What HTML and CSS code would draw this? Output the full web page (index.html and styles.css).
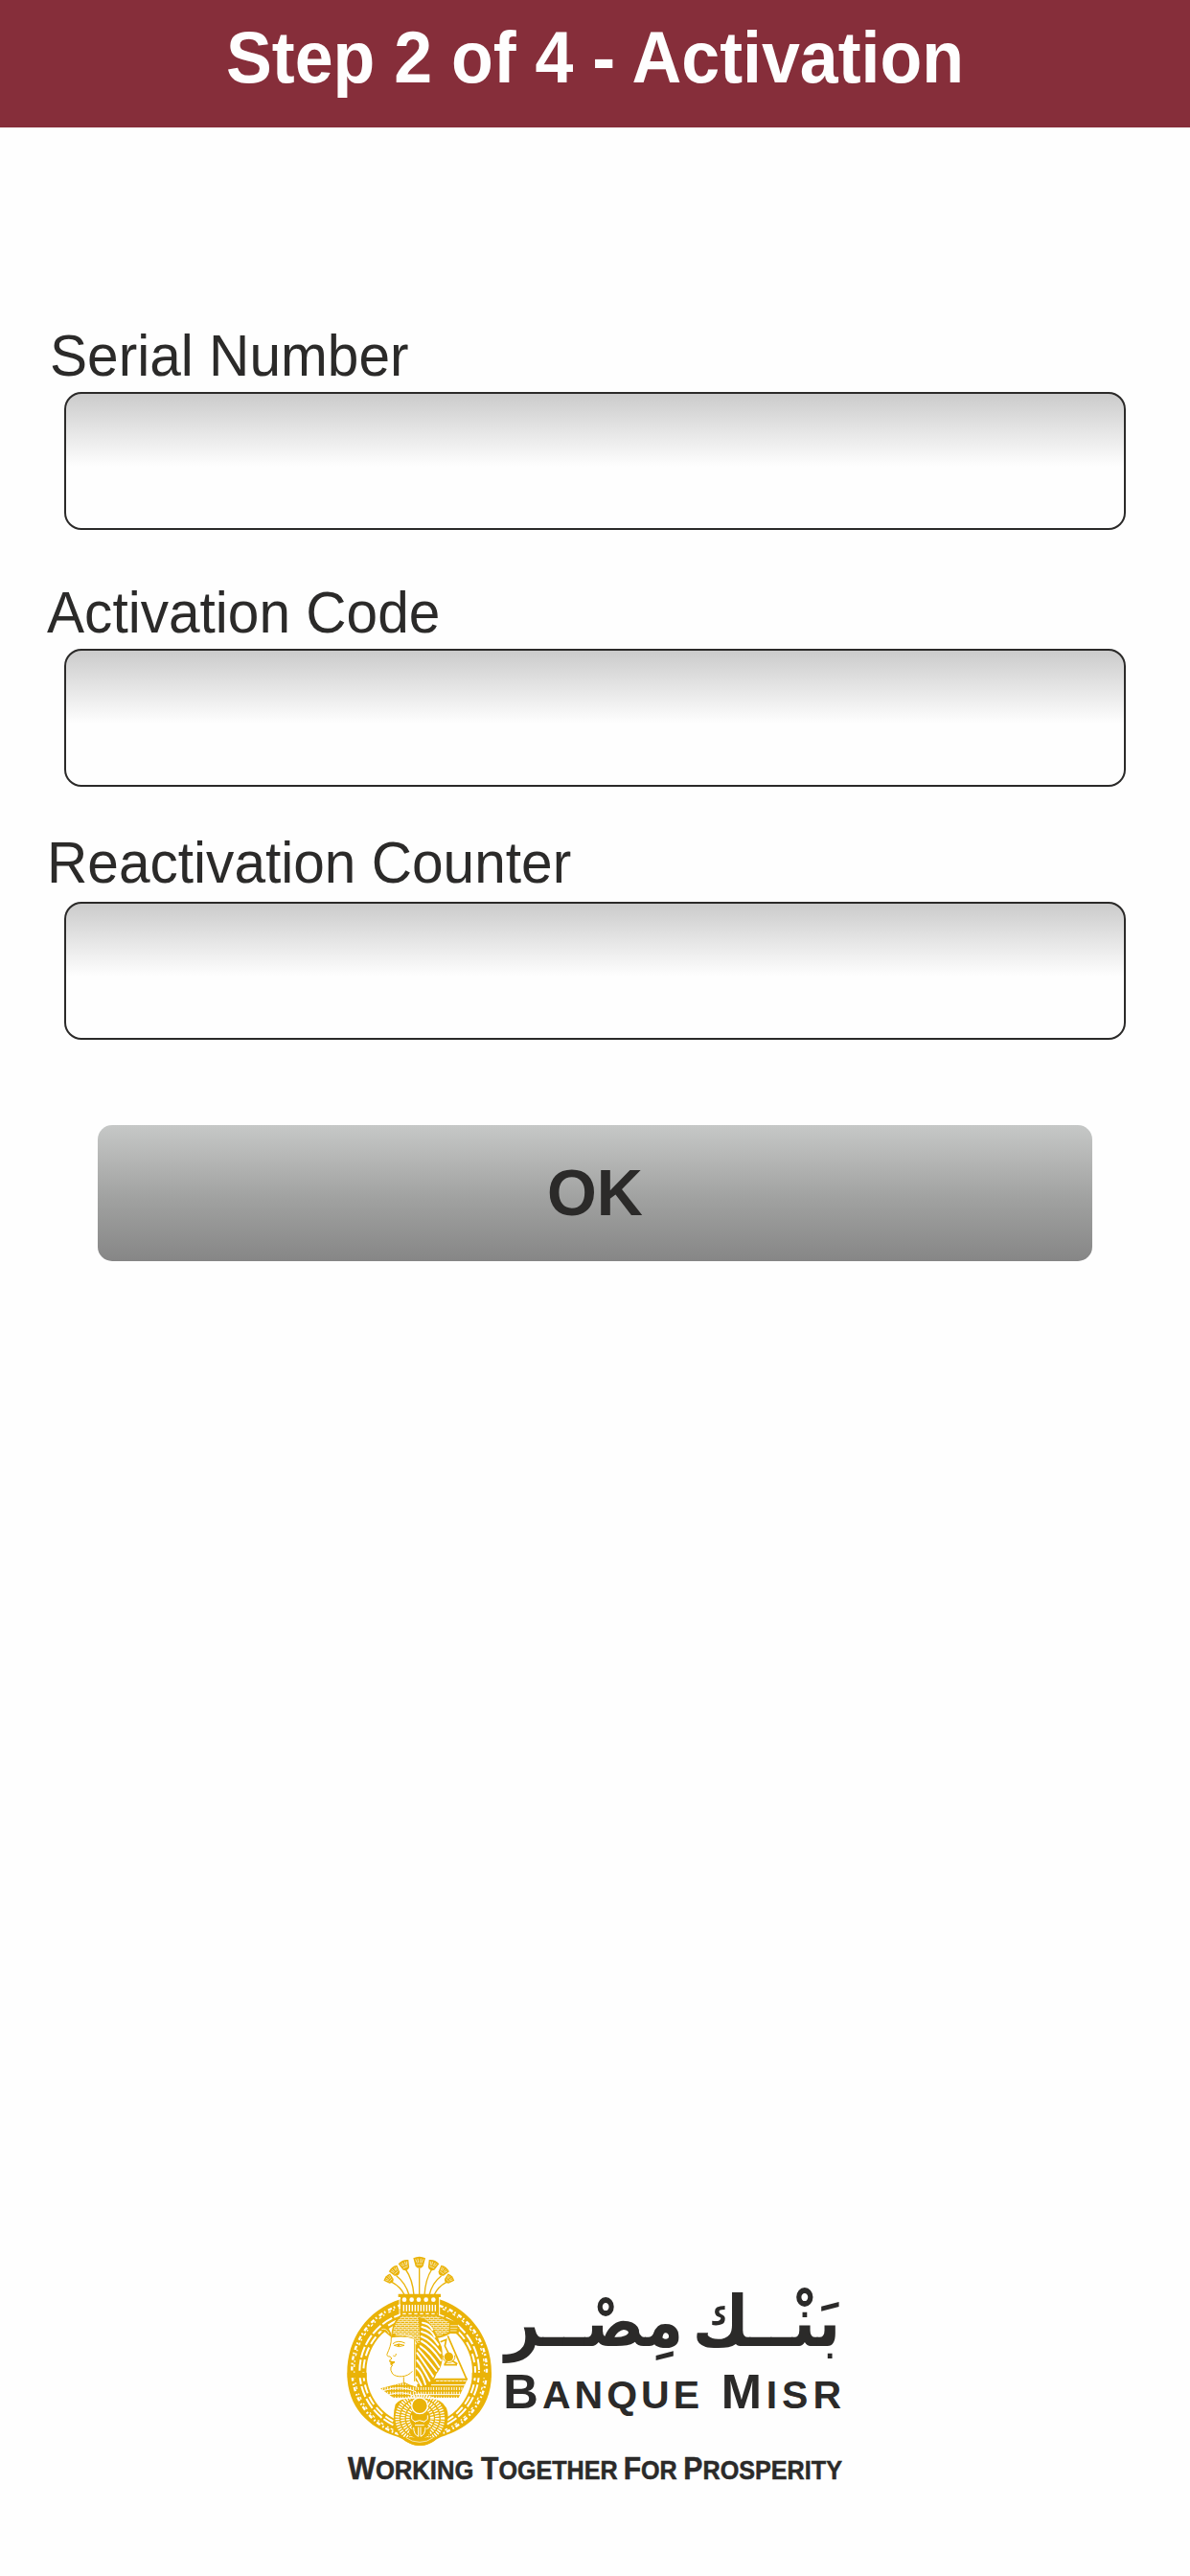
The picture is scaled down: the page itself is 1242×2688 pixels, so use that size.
FILE: index.html
```html
<!DOCTYPE html>
<html lang="en">
<head>
<meta charset="UTF-8">
<title>Activation</title>
<link rel="stylesheet" href="styles.css">
</head>

<body>

	<h1 class="header"><span>Step 2 of 4 - Activation</span></h1>

	<form class="activation">
		<div class="field serial">
			<label for="serial">Serial Number</label>
			<input id="serial" type="text" name="serial">
		</div>
		<div class="field code">
			<label for="code">Activation Code</label>
			<input id="code" type="text" name="code">
		</div>
		<div class="field counter">
			<label for="counter">Reactivation Counter</label>
			<input id="counter" type="text" name="counter">
		</div>
		<button class="ok" type="button"><span>OK</span></button>
	</form>

	<div class="logo">
	<svg width="540" height="260" viewBox="0 0 1620 780">
		<defs>
			<pattern id="scales" width="13" height="12" patternUnits="userSpaceOnUse">
				<path class="w2" d="M0 1 H13 M0 7 H13 M3 1 V7 M9 7 V13"/>
			</pattern>
			<pattern id="beads" width="8" height="15" patternUnits="userSpaceOnUse">
				<path class="w3" d="M4 2 V12"/>
			</pattern>
			<g id="lotus">
				<path class="gold" d="M-19 -15 Q0 -25 19 -15 L12 10 Q0 23 -12 10 Z"/>
				<path class="w2" d="M-12 -12 L-7 0 M-5 -14 L-3 -1 M5 -14 L3 -1 M12 -12 L7 0 M-9 5 H9"/>
			</g>
		</defs>

		<!-- flowers -->
		<path class="g4" d="M263 165 V80 M246 165 Q242 115 220 84 M279 165 Q282 115 302 84 M231 165 Q220 126 191 104 M294 165 Q303 126 332 104 M217 165 Q204 138 177 124 M309 165 Q321 138 348 124"/>
		<use href="#lotus" transform="translate(263 64)"/>
		<use href="#lotus" transform="translate(218 73) rotate(-22) scale(.9)"/>
		<use href="#lotus" transform="translate(304 73) rotate(22) scale(.9)"/>
		<use href="#lotus" transform="translate(188 91) rotate(-38) scale(.85)"/>
		<use href="#lotus" transform="translate(336 91) rotate(38) scale(.85)"/>
		<use href="#lotus" transform="translate(170 116) rotate(-48) scale(.78)"/>
		<use href="#lotus" transform="translate(354 116) rotate(48) scale(.78)"/>

		<!-- ring -->
		<path class="gold" d="M203 178 C100 212 37 300 37 410 C37 520 110 582 195 608 C218 616 230 636 265 636 C300 636 310 616 332 608 C420 582 489 520 489 410 C489 300 425 212 326 178 Z"/>
		<circle class="white" cx="263" cy="405" r="166"/>
		<g class="ring">
			<circle cx="263" cy="399" r="211" stroke-width="7" stroke-dasharray="13 6 5 9"/>
			<circle cx="263" cy="399" r="204" stroke-width="4" stroke-dasharray="5 14 9 7"/>
			<circle cx="263" cy="403" r="187" stroke-width="6" stroke-dasharray="35 7"/>
			<circle cx="263" cy="405" r="175" stroke-width="6" stroke-dasharray="28 12"/>
		</g>
		<path class="gold" d="M38 407 H98 V424 H38 Z M428 407 H488 V424 H428 Z"/>

		<!-- staff and counterweight -->
		<path class="g5" d="M352 292 L412 430 M329 311 L347 304 L343 324 L354 346 M342 382 L350 370 M382 380 L365 370 M340 383 H381"/>
		<circle class="gold" cx="355" cy="358" r="14"/>
		<path class="g3" d="M337 353 A19 19 0 1 0 374 353"/>

		<!-- shoulders -->
		<path class="gold" d="M317 425 H415 L386 486 H250 V445 Z M141 457 L214 438 L256 455 V486 H182 Z"/>
		<path class="fill-beads" d="M258 453 H402 L386 486 H258 Z M141 457 L214 438 L256 455 V486 H182 Z"/>
		<path class="w3" d="M315 433 H410 M300 446 H406 M250 476 H392 M150 464 Q205 445 252 467 M166 477 Q210 462 250 482"/>
		<path class="w3 dots" d="M325 433 H405"/>

		<!-- face -->
		<path class="white" d="M178 292 H256 V455 L215 439 V421 H185 L170 395 L167 360 Z"/>
		<path class="g3" d="M175 296 C176 318 169 333 162 349 Q160 357 171 357 L177 363 Q167 368 170 373 L186 374 L173 380 Q184 384 174 390 Q171 399 179 411 C190 423 225 424 241 403 M214 421 V441 M214 438 Q232 448 253 453 M248 301 V435 M180 317 Q196 304 218 315 M184 322 Q198 314 216 322 Q198 330 184 322 M181 354 Q189 360 190 348"/>
		<circle class="gold" cx="198" cy="321" r="4"/>
		<path class="gold" d="M171 370 L187 374 L174 386 Z"/>

		<!-- headdress -->
		<path class="gold" d="M175 292 C178 257 188 242 204 226 H320 L372 247 L389 247 L382 260 L390 267 L382 274 L386 286 L360 285 Q336 299 315 300 L257 324 L248 302 Q214 291 175 298 Z"/>
		<path class="fill-scales" d="M179 287 C184 258 192 244 209 230 H317 L357 250 L355 281 L316 296 L258 315 L245 299 Z"/>
		<path class="gold" d="M174 283 Q166 260 149 263 L134 275 L155 280 L178 299 Z"/>
		<path class="w2" d="M145 272 Q160 267 168 285 M360 260 H381 M360 268 H382 M360 276 H380 M190 290 Q225 284 247 299"/>
		<path class="gold" d="M260 233 C296 240 310 268 333 327 C340 366 332 394 317 410 Q306 444 274 454 L251 432 V318 L266 323 Z"/>
		<path class="feather" d="M273 251 Q294 253 304 273 M271 264 Q300 271 311 296 M270 279 Q300 286 322 320 M269 294 Q300 306 329 346 M270 309 Q299 324 330 369 M267 325 Q296 344 325 390 M260 334 Q285 361 316 402 M256 346 Q276 373 306 419 M256 369 Q273 390 295 433 M255 394 Q272 410 282 444 M255 421 L269 447"/>

		<!-- crown -->
		<path class="gold" d="M197 161 H330 V171 H325 V229 H204 V171 H197 Z"/>
		<path class="w3" d="M201 171 V229 M326 171 V229"/>
		<g class="white"><circle cx="216" cy="179" r="7"/><circle cx="239" cy="179" r="7"/><circle cx="261" cy="179" r="7"/><circle cx="284" cy="179" r="7"/><circle cx="307" cy="179" r="7"/></g>
		<path class="w4" d="M214 195 V215 M223 195 V215 M232 195 V215 M241 195 V215 M250 195 V215 M259 195 V215 M268 195 V215 M277 195 V215 M286 195 V215 M295 195 V215 M304 195 V215 M313 195 V215"/>
		<path class="w4" d="M211 223 H320" stroke-dasharray="10 8"/>

		<!-- winged scarab -->
		<path class="gold" d="M188 507 Q205 485 242 489 L265 486 L290 489 Q331 486 348 518 Q363 557 332 604 L287 627 H243 L198 603 Q173 559 188 507 Z"/>
		<g class="wings">
			<circle cx="265" cy="550" r="71" stroke-width="13"/>
			<circle cx="265" cy="550" r="54" stroke-width="13"/>
			<circle cx="265" cy="550" r="38" stroke-width="11"/>
		</g>
		<circle class="gold halo" cx="264" cy="511" r="25"/>
		<path class="gold" d="M235 545 L252 551 Q264 535 277 551 L295 545 L287 570 L297 590 L288 615 H240 L231 590 L242 570 Z"/>
		<path class="w3" d="M239 541 V553 L251 562 M289 541 V553 L277 562 M249 561 Q263 553 278 561 M249 572 H278 M245 579 Q246 603 260 607 V578 M282 579 Q281 603 267 607 V578 M233 578 L241 584 M294 578 L286 584 M235 607 L248 612 M292 607 L279 612"/>
		<path class="gold" d="M205 610 L323 610 Q294 636 265 636 Q234 636 205 610 Z"/>
		<path class="w2" d="M222 611 Q240 625 264 625 Q288 625 306 611"/>

		<!-- name -->
		<g class="ink">
			<text class="arabic" x="1350" y="323" textLength="464" lengthAdjust="spacingAndGlyphs" direction="rtl" text-anchor="middle">بَنْــك</text>
			<text class="arabic" x="810" y="323" textLength="558" lengthAdjust="spacingAndGlyphs" direction="rtl" text-anchor="middle">مِصْــر</text>
			<g class="name">
				<text x="526" y="519" textLength="614" lengthAdjust="spacing">B<tspan class="small">ANQUE</tspan></text>
				<text x="1208" y="519" textLength="376" lengthAdjust="spacing">M<tspan class="small">ISR</tspan></text>
			</g>
			<g class="tagline">
				<text x="39" y="741" textLength="394" lengthAdjust="spacingAndGlyphs">W<tspan class="small">ORKING</tspan></text>
				<text x="456" y="741" textLength="428" lengthAdjust="spacingAndGlyphs">T<tspan class="small">OGETHER</tspan></text>
				<text x="902" y="741" textLength="168" lengthAdjust="spacingAndGlyphs">F<tspan class="small">OR</tspan></text>
				<text x="1090" y="741" textLength="497" lengthAdjust="spacingAndGlyphs">P<tspan class="small">ROSPERITY</tspan></text>
			</g>
		</g>
	</svg>
	</div>

</body>
</html>
```

FILE: styles.css
```css
body {
  margin: 0;
  height: 2688px;
  display: flex;
  flex-direction: column;
  background-color: #fefefe;
  color: #2b2a29;
  font-family: Arial, "Liberation Sans", sans-serif;
}

.header {
  box-sizing: border-box;
  height: 133px;
  margin: 0;
  background-color: #862e3a;
  color: #fefefe;
  font-size: 71.7px;
  line-height: 122px;
  text-align: center;
}
.header span {
  display: block;
  transform: scaleY(1.05);
  transform-origin: 0 86px;
}

.activation {
  display: flex;
  flex-direction: column;
  padding: 209px 67px 0;
}
.field {
  display: flex;
  flex-direction: column;
  gap: 7px;
}
.field label {
  height: 60px;
  font-size: 58.6px;
  line-height: 60px;
  white-space: nowrap;
  transform: scaleY(1.04);
  transform-origin: 0 50px;
}
.serial label { margin-left: -15px; }
.code label,
.counter label { margin-left: -18px; }
.code { margin-top: 57px; }
.counter {
  margin-top: 50px;
  gap: 10px;
}
.field input {
  box-sizing: border-box;
  width: 100%;
  height: 144px;
  padding: 0 20px;
  border: 2px solid #2b2a29;
  border-radius: 18px;
  background: linear-gradient(#cbcbcb, #fefefe 54%);
  font-family: inherit;
  font-size: 58px;
}

.ok {
  height: 142px;
  margin: 89px 35px 0;
  padding: 0;
  border: none;
  border-radius: 15px;
  background: linear-gradient(#c6c8c7, #a0a1a0 55%, #868686);
  color: #2b2a29;
  font-family: inherit;
  font-size: 66.6px;
  font-weight: bold;
  line-height: 142px;
}
.ok span {
  display: block;
  transform: scaleY(1.04);
  transform-origin: 0 94px;
}

.logo {
  width: 540px;
  margin: auto 0 88px 350px;
}
.logo svg { display: block; }

.gold { fill: #eab308; }
.white { fill: #fefefe; }
.ink { fill: #2b2a29; }
.g3, .g4, .g5 { fill: none; stroke: #eab308; }
.g3 { stroke-width: 3; }
.g4 { stroke-width: 4; }
.g5 { stroke-width: 5; }
.w2, .w3, .w4 { fill: none; stroke: #fefefe; }
.w2 { stroke-width: 2; }
.w3 { stroke-width: 3; }
.w4 { stroke-width: 4; }
.dots { stroke: #eab308; stroke-dasharray: 3 9; }
.ring { fill: none; stroke: #fefefe; }
.feather { fill: none; stroke: #fefefe; stroke-width: 6; stroke-linecap: round; }
.wings { fill: none; stroke: #fefefe; stroke-dasharray: 4 4; }
.halo { stroke: #fefefe; stroke-width: 4; }
.fill-scales { fill: url(#scales); }
.fill-beads { fill: url(#beads); }

.arabic {
  font-family: "DejaVu Sans", sans-serif;
  font-size: 220px;
  font-weight: bold;
}
.name {
  font-family: "Liberation Sans", sans-serif;
  font-size: 152px;
  font-weight: bold;
}
.name .small { font-size: 123px; }
.tagline {
  font-family: "Liberation Sans", sans-serif;
  font-size: 97px;
  font-weight: bold;
  stroke: #2b2a29;
  stroke-width: 1.5px;
}
.tagline .small { font-size: 81px; }
```
